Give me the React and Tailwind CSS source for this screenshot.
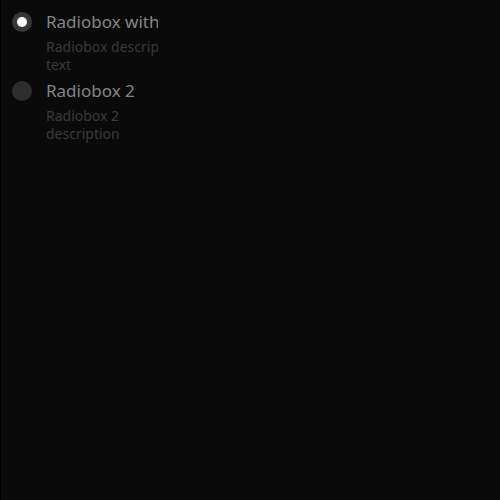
export default function App() {
  const items = [
    { id: 1, title: "Radiobox with description", desc: "Radiobox description text", checked: true },
    { id: 2, title: "Radiobox 2", desc: "Radiobox 2 description", checked: false },
  ];

  return (
    <div
      className="h-[500px] w-[500px] border-l border-black bg-[#0a0a0a] py-3 pl-[11px] pr-3"
      style={{ fontFamily: '"Noto Sans", sans-serif' }}
    >
      <div className="flex w-[146px] flex-col gap-[7px] overflow-hidden">
        {items.map((it) => (
          <div key={it.id} className="flex items-start gap-[14px]">
            {it.checked ? (
              <span className="flex h-5 w-5 shrink-0 items-center justify-center rounded-full bg-[#383838]">
                <span className="h-[10px] w-[10px] rounded-full bg-white" />
              </span>
            ) : (
              <span className="h-5 w-5 shrink-0 rounded-full bg-[#2e2e2e]" />
            )}
            <div className="w-[144px] shrink-0">
              <div className="whitespace-nowrap text-[17px] leading-5 text-[#858585]">{it.title}</div>
              <div className="mt-[6px] text-[14px] leading-[18px] text-[#3a3a3a]">{it.desc}</div>
            </div>
          </div>
        ))}
      </div>
    </div>
  );
}
